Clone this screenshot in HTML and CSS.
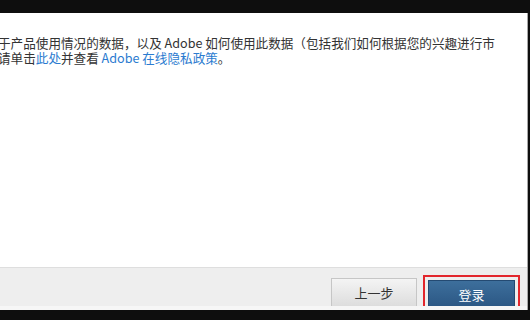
FILE: index.html
```html
<!DOCTYPE html>
<html lang="zh-CN">
<head>
	<meta charset="UTF-8">
	<title>登录</title>
	<link rel="stylesheet" href="styles.css">
</head>
<body>
	<div class="top_bar"></div>
	<div class="dialog">
		<div class="content">
			<p class="line">于产品使用情况的数据，以及 Adobe 如何使用此数据（包括我们如何根据您的兴趣进行市</p>
			<p class="line">请单击<a href="">此处</a>并查看 <a href="">Adobe 在线隐私政策</a>。</p>
		</div>
		<div class="footer">
			<div class="btn btn_prev">上一步</div>
			<div class="mark">
				<div class="btn btn_login">登录</div>
			</div>
		</div>
		<div class="strip"></div>
	</div>
</body>
</html>
```

FILE: styles.css
```css
* {
	margin: 0;
	padding: 0;
}

body {
	background-color: #0e0e0e;
	font-family: "Noto Sans CJK SC", "Liberation Sans", sans-serif;
	font-size: 13px;
	color: #333;
}

.top_bar {
	height: 13px;
}

.dialog {
	width: 527px;
	background-color: #fff;
	border-right: 1px solid #a8a8a8;
}

.content {
	height: 254px;
	padding-top: 22px;
	box-sizing: border-box;
	overflow: hidden;
}

.content .line {
	margin-left: -2px;
	font-size: 12.6px;
	height: 15px;
	line-height: 15px;
	white-space: nowrap;
}

.content a {
	color: #2b7bd0;
	text-decoration: none;
}

.footer {
	height: 39px;
	background-color: #eee;
	border-top: 1px solid #dedede;
	box-sizing: border-box;
	display: flex;
	justify-content: flex-end;
	align-items: flex-start;
	gap: 6px;
	padding: 7px 7px 0 0;
	overflow: hidden;
}

.btn {
	height: 30px;
	line-height: 28px;
	text-align: center;
	box-sizing: border-box;
	font-size: 13px;
}

.btn_prev {
	width: 86px;
	margin-top: 3px;
	background: linear-gradient(#f4f4f4, #dcdcdc);
	border: 1px solid #c6c6c6;
	color: #333;
}

.mark {
	border: 2px solid #e2262c;
	padding: 3px 3px 0;
}

.btn_login {
	width: 87px;
	background: linear-gradient(#3d6f9c, #2a5582);
	border: 1px solid #244a72;
	color: #fff;
}

.strip {
	height: 4px;
	background-color: #f6f6f6;
}
```
